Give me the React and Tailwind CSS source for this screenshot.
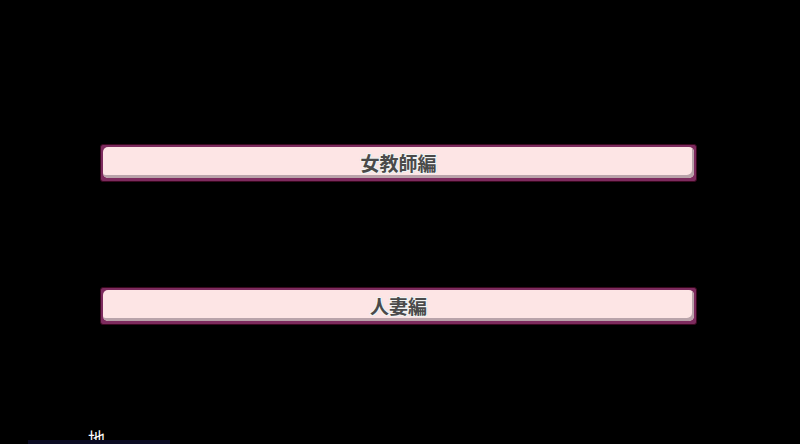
import React from "react";

const outline =
  "[text-shadow:-1px_-1px_0_#f2f2f2,1px_-1px_0_#f2f2f2,-1px_1px_0_#f2f2f2,1px_1px_0_#f2f2f2,0_1px_0_#f2f2f2,0_-1px_0_#f2f2f2,1px_0_0_#f2f2f2,-1px_0_0_#f2f2f2,0_0_2px_#9a9a9a]";

function ChoiceButton({ label }) {
  return (
    <div className="ml-[100px] w-[597px] shrink-0 rounded-[3px] border border-[#3a0820] bg-[#7d2b5e] px-[2px] pt-[2px] pb-[3px]">
      <div className="flex h-[31px] items-center justify-center rounded-[5px] bg-[#fde5e5] shadow-[inset_-2px_-3px_0_#b9a3aa]">
        <span
          className={`text-[19px] leading-none font-bold text-[#4a4a4a] ${outline}`}
          style={{ fontFamily: '"Noto Sans CJK JP", "Noto Sans", sans-serif' }}
        >
          {label}
        </span>
      </div>
    </div>
  );
}

export default function App() {
  return (
    <div className="relative flex h-[444px] w-[800px] flex-col overflow-hidden bg-black">
      <div className="h-[144px] shrink-0" />
      <ChoiceButton label="女教師編" />
      <div className="h-[105px] shrink-0" />
      <ChoiceButton label="人妻編" />
      {/* message window, mostly off screen */}
      <div className="mt-[104px] ml-[88px] flex shrink-0">
        <span
          className="text-[17px] leading-none text-white"
          style={{ fontFamily: '"Noto Sans CJK JP", sans-serif' }}
        >
          地
        </span>
      </div>
      <div className="absolute bottom-0 left-[28px] h-[4px] w-[142px] bg-[#0b0b22]" />
    </div>
  );
}
